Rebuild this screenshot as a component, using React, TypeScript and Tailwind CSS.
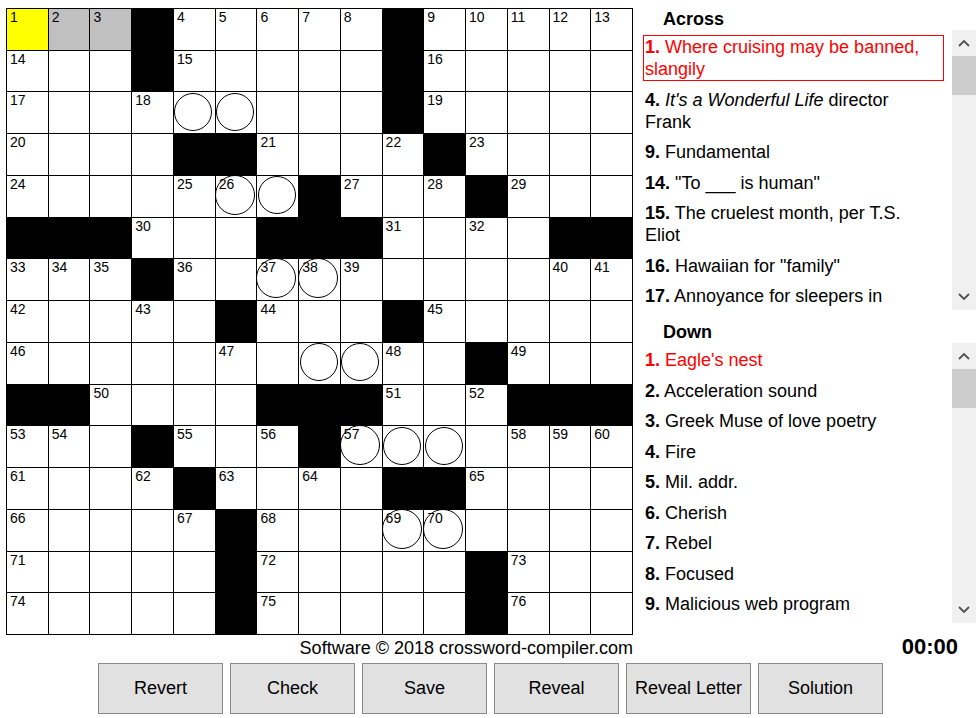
import type { ReactNode } from "react";

const LAYOUT = [
  "...#.....#.....",
  "...#.....#.....",
  ".........#.....",
  "....##....#....",
  ".......#...#...",
  "###...###....##",
  "...#...........",
  ".....#...#.....",
  "...........#...",
  "##....###...###",
  "...#...#.......",
  "....#....##....",
  ".....#.........",
  ".....#.....#...",
  ".....#.....#...",
];

const CIRCLES = new Set([
  "2,4", "2,5", "4,5", "4,6", "6,6", "6,7", "8,7", "8,8",
  "10,8", "10,9", "10,10", "12,9", "12,10",
]);

type Clue = { num: number; text: ReactNode };

const ACROSS: Clue[] = [
  { num: 1, text: "Where cruising may be banned, slangily" },
  { num: 4, text: <><i>It's a Wonderful Life</i> director Frank</> },
  { num: 9, text: "Fundamental" },
  { num: 14, text: '"To ___ is human"' },
  { num: 15, text: "The cruelest month, per T.S. Eliot" },
  { num: 16, text: 'Hawaiian for "family"' },
  { num: 17, text: "Annoyance for sleepers in neighboring rooms" },
  { num: 19, text: "Stadium cheer" },
  { num: 20, text: "Kind of board" },
];

const DOWN: Clue[] = [
  { num: 1, text: "Eagle's nest" },
  { num: 2, text: "Acceleration sound" },
  { num: 3, text: "Greek Muse of love poetry" },
  { num: 4, text: "Fire" },
  { num: 5, text: "Mil. addr." },
  { num: 6, text: "Cherish" },
  { num: 7, text: "Rebel" },
  { num: 8, text: "Focused" },
  { num: 9, text: "Malicious web program" },
  { num: 10, text: "Tennis great" },
];

const isBlack = (r: number, c: number) =>
  r < 0 || c < 0 || r > 14 || c > 14 || LAYOUT[r][c] === "#";

function buildNumbers() {
  const nums: (number | null)[][] = [];
  let n = 1;
  for (let r = 0; r < 15; r++) {
    const row: (number | null)[] = [];
    for (let c = 0; c < 15; c++) {
      if (isBlack(r, c)) { row.push(null); continue; }
      const across = isBlack(r, c - 1) && !isBlack(r, c + 1);
      const down = isBlack(r - 1, c) && !isBlack(r + 1, c);
      row.push(across || down ? n++ : null);
    }
    nums.push(row);
  }
  return nums;
}

const NUMBERS = buildNumbers();

function Cell({ r, c }: { r: number; c: number }) {
  if (isBlack(r, c)) return <div className="bg-black" />;
  const num = NUMBERS[r][c];
  const circled = CIRCLES.has(`${r},${c}`);
  const bg =
    r === 0 && c === 0 ? "bg-[#ffff00]" : r === 0 && (c === 1 || c === 2) ? "bg-[#c0c0c0]" : "bg-white";
  return (
    <div className={`relative ${bg}`}>
      {circled &&
        (num ? (
          <div className="absolute -left-[1px] -top-[1px] w-[40px] h-[40px] rounded-full border-[1.3px] border-black" />
        ) : (
          <div className="absolute left-[0.5px] top-[0.5px] w-[38px] h-[38px] rounded-full border-[1.3px] border-black" />
        ))}
      {num && (
        <span className="absolute left-[3px] top-0 text-[14px] leading-[16px] text-black">{num}</span>
      )}
    </div>
  );
}

function Chevron({ up }: { up?: boolean }) {
  return (
    <svg width="12" height="8" viewBox="0 0 12 8" className="block">
      <polyline
        points={up ? "1,7 6,2 11,7" : "1,1 6,6 11,1"}
        fill="none"
        stroke="#505050"
        strokeWidth="1.8"
      />
    </svg>
  );
}

function ClueList({ clues, boxed }: { clues: Clue[]; boxed?: boolean }) {
  return (
    <div className="flex h-[280px]">
      <ul className="flex-1 overflow-hidden pt-[5px] pr-[8px]">
        {clues.map((cl, i) => {
          const active = i === 0;
          return (
            <li
              key={cl.num}
              className={`border pl-[1px] pr-[10px] mb-[6.5px] text-[18px] leading-[22px] ${
                active && boxed ? "border-[#ff0000]" : "border-transparent"
              } ${active ? "text-[#ff0000]" : "text-black"}`}
            >
              <b>{cl.num}.</b> {cl.text}
            </li>
          );
        })}
      </ul>
      <div className="w-[24px] bg-[#f0f0f0] flex flex-col">
        <div className="h-[26px] flex items-center justify-center">
          <Chevron up />
        </div>
        <div className="h-[39px] bg-[#cdcdcd]" />
        <div className="flex-1" />
        <div className="h-[26px] flex items-center justify-center">
          <Chevron />
        </div>
      </div>
    </div>
  );
}

const BUTTONS = ["Revert", "Check", "Save", "Reveal", "Reveal Letter", "Solution"];

export default function App() {
  return (
    <div className="w-[976px] h-[718px] bg-white text-black font-['Liberation_Sans',Arial,sans-serif] overflow-hidden">
      <div className="flex">
        <div className="ml-[6px] mt-[8px] w-[627px]">
          <div className="grid grid-cols-[repeat(15,minmax(0,1fr))] grid-rows-[repeat(15,minmax(0,1fr))] gap-px bg-black border border-black w-[627px] h-[627px]">
            {LAYOUT.map((row, r) =>
              row.split("").map((_, c) => <Cell key={`${r}-${c}`} r={r} c={c} />)
            )}
          </div>
          <p className="mt-[3px] text-right text-[18px] leading-[21px]">
            Software © 2018 crossword-compiler.com
          </p>
        </div>

        <div className="ml-[10px] w-[333px] pt-[8px]">
          <h2 className="h-[22px] leading-[22px] text-[18px] font-bold pl-[20px]">Across</h2>
          <ClueList clues={ACROSS} boxed />
          <h2 className="mt-[11px] h-[22px] leading-[22px] text-[18px] font-bold pl-[20px]">Down</h2>
          <ClueList clues={DOWN} />
          <div className="mt-[11px] pr-[18px] text-right text-[22px] leading-[25px] font-bold">00:00</div>
        </div>
      </div>

      <div className="flex gap-[7px] ml-[98px] mt-[4px]">
        {BUTTONS.map((b) => (
          <button
            key={b}
            className="w-[125px] h-[51px] bg-[#e1e1e1] border border-[#8a8a8a] text-[18px] text-black"
          >
            {b}
          </button>
        ))}
      </div>
    </div>
  );
}
